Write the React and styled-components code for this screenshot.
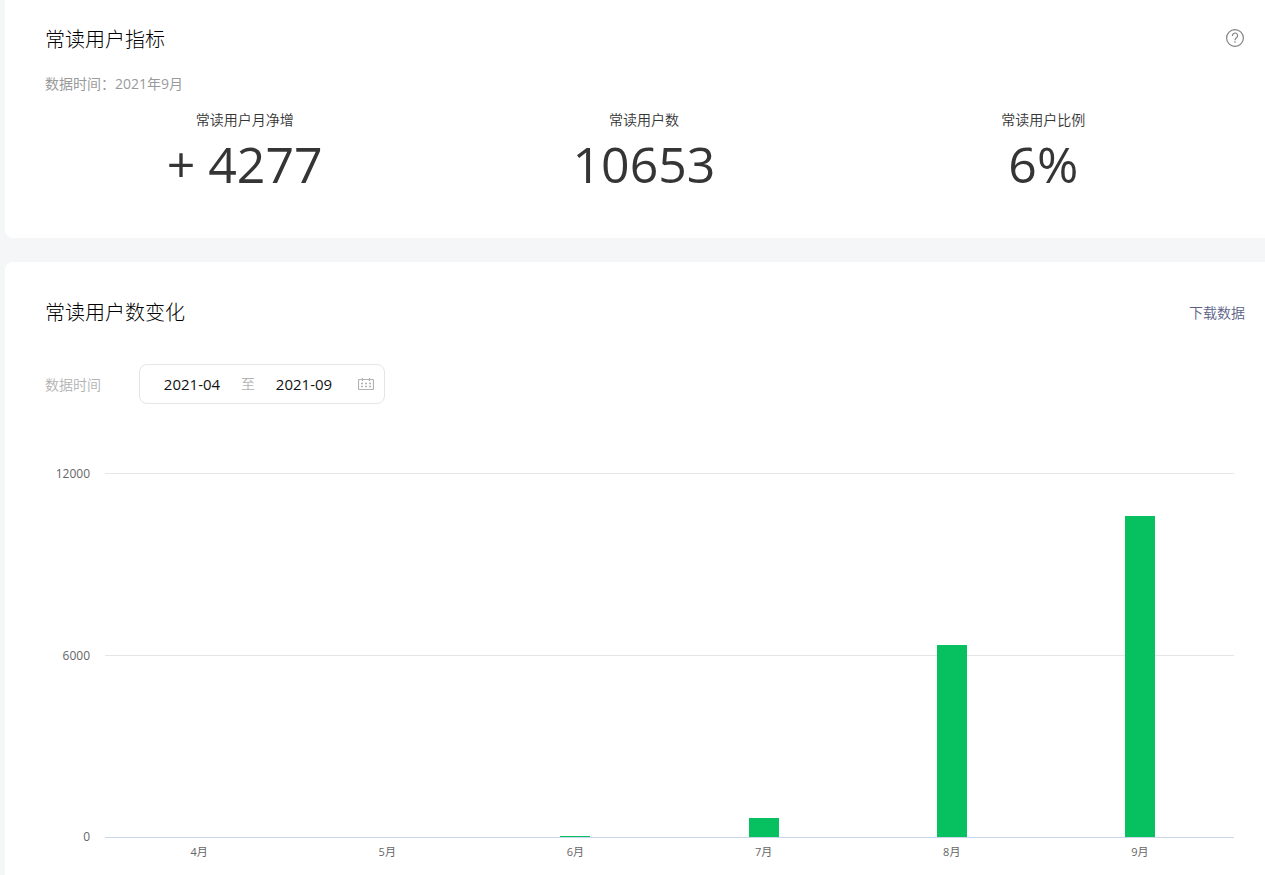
import React from 'react';
import styled, { createGlobalStyle } from 'styled-components';

const GlobalStyle = createGlobalStyle`
  * { box-sizing: border-box; }
  body {
    margin: 0;
    background: #f5f6f8;
    color: #353535;
    font: 350 14px/20px 'Open Sans', 'Noto Sans CJK SC', sans-serif;
  }
`;

const Page = styled.main`
  display: flex;
  flex-direction: column;
  gap: 24px;
  padding-left: 5px;
`;

const Card = styled.section`
  background: #fff;
  border-radius: ${(p) => (p.$first ? '0 0 0 8px' : '8px 0 0 0')};
  padding: ${(p) => (p.$first ? '24px 20px 40px 40px' : '35px 20px 14px 40px')};
`;

const CardHeader = styled.header`
  display: flex;
  align-items: center;
  justify-content: space-between;
`;

const Title = styled.h2`
  margin: 0;
  font-size: 20px;
  line-height: 32px;
  font-weight: 300;
  color: #000;
`;

const HelpButton = styled.button`
  display: flex;
  align-self: flex-start;
  padding: 4px 0;
  border: 0;
  background: none;
  color: #808080;
`;

const DownloadLink = styled.a`
  color: #5b5f86;
  text-decoration: none;
`;

const DataTime = styled.p`
  margin: 18px 0 16px;
  color: #9a9a9a;
  font-weight: 400;
`;

const Stats = styled.dl`
  display: grid;
  grid-template-columns: repeat(3, 1fr);
  margin: 0;
  padding-right: 2px;
  text-align: center;
`;

const StatLabel = styled.dt`
  line-height: 20px;
`;

const StatValue = styled.dd`
  margin: 0;
  font-weight: 400;
  font-size: 50px;
  line-height: 68px;
  white-space: pre;
`;

const Filter = styled.div`
  display: flex;
  align-items: center;
  gap: 38px;
  margin-top: 35px;
`;

const FilterLabel = styled.label`
  padding-top: 2px;
  color: #b2b2b2;
`;

const DateRange = styled.div`
  display: flex;
  align-items: center;
  width: 246px;
  height: 40px;
  padding: 0 10px 0 16px;
  border: 1px solid #e4e5e8;
  border-radius: 8px;
  color: #b2b2b2;
`;

const DateInput = styled.input`
  width: 72px;
  padding: 0;
  border: 0;
  outline: 0;
  background: none;
  color: #111;
  font: 400 15px/20px 'Open Sans', sans-serif;
  text-align: center;
`;

const DateSeparator = styled.span`
  width: 40px;
  text-align: center;
`;

const CalendarButton = styled.button`
  display: flex;
  margin-left: auto;
  padding: 0;
  border: 0;
  background: none;
  color: #b2b2b2;
`;

const Chart = styled.div`
  display: grid;
  grid-template-columns: 45px 1fr;
  column-gap: 15px;
  margin: 60px 11px 0 0;
  color: #666;
  font-size: 11px;
  font-weight: 400;
`;

const YAxis = styled.div`
  display: flex;
  flex-direction: column;
  justify-content: space-between;
  font-size: 12px;
  text-align: right;
`;

const Plot = styled.div`
  display: grid;
  height: 365px;
  margin: 9px 0;
`;

const GridLines = styled.div`
  grid-area: 1 / 1;
  display: flex;
  flex-direction: column;
  justify-content: space-between;
`;

const GridLine = styled.div`
  height: 1px;
  background: ${(p) => (p.$axis ? '#ccd6eb' : '#e6e6e6')};
`;

const Bars = styled.div`
  grid-area: 1 / 1;
  z-index: 1;
  display: grid;
  grid-template-columns: repeat(6, 1fr);
  justify-items: center;
  align-items: end;
  padding-bottom: 1px;
`;

const Bar = styled.div`
  width: 30px;
  background: #07c160;
`;

const XAxis = styled.div`
  grid-column: 2;
  display: grid;
  grid-template-columns: repeat(6, 1fr);
  margin-top: -5px;
  text-align: center;
`;

const stats = [
  ['常读用户月净增', '+ 4277'],
  ['常读用户数', '10653'],
  ['常读用户比例', '6%'],
];

const MAX = 12000;
const ticks = [12000, 6000, 0];
const months = [
  ['4月', 0],
  ['5月', 0],
  ['6月', 33],
  ['7月', 630],
  ['8月', 6340],
  ['9月', 10590],
];

function HelpIcon() {
  return (
    <svg width="20" height="20" viewBox="0 0 20 20" fill="none" stroke="currentColor" strokeWidth="1.2">
      <circle cx="10" cy="10" r="8.4" />
      <path d="M7.4 8V7.600a2.600 2.600 0 1 1 4.300 2c-1 .9-1.700 1.200-1.700 2.600" />
      <path d="M10 13.300v1.500" />
    </svg>
  );
}

function CalendarIcon() {
  return (
    <svg width="16" height="14" viewBox="0 0 16 14" fill="none" stroke="currentColor">
      <rect x="0.5" y="2.500" width="15" height="10" rx="1" strokeWidth="1.200" />
      <path d="M4.500 1v3M11.500 1v3" strokeWidth="1.200" />
      <path d="M3 6.500h2M7 6.500h2M11 6.500h2M3 9.500h2M7 9.500h2M11 9.500h2" strokeWidth="1.500" />
    </svg>
  );
}

export default function App() {
  return (
    <>
      <GlobalStyle />
      <Page>
        <Card $first>
          <CardHeader>
            <Title>常读用户指标</Title>
            <HelpButton type="button" aria-label="帮助">
              <HelpIcon />
            </HelpButton>
          </CardHeader>
          <DataTime>数据时间：2021年9月</DataTime>
          <Stats>
            {stats.map(([label, value]) => (
              <div key={label}>
                <StatLabel>{label}</StatLabel>
                <StatValue>{value}</StatValue>
              </div>
            ))}
          </Stats>
        </Card>

        <Card>
          <CardHeader>
            <Title>常读用户数变化</Title>
            <DownloadLink href="#download">下载数据</DownloadLink>
          </CardHeader>
          <Filter>
            <FilterLabel htmlFor="start-month">数据时间</FilterLabel>
            <DateRange>
              <DateInput id="start-month" type="text" defaultValue="2021-04" />
              <DateSeparator>至</DateSeparator>
              <DateInput type="text" aria-label="结束月份" defaultValue="2021-09" />
              <CalendarButton type="button" aria-label="选择日期">
                <CalendarIcon />
              </CalendarButton>
            </DateRange>
          </Filter>
          <Chart>
            <YAxis>
              {ticks.map((t) => (
                <span key={t}>{t}</span>
              ))}
            </YAxis>
            <Plot>
              <GridLines>
                {ticks.map((t) => (
                  <GridLine key={t} $axis={t === 0} />
                ))}
              </GridLines>
              <Bars>
                {months.map(([name, value]) => (
                  <Bar key={name} style={{ height: `${(value / MAX) * 100}%` }} />
                ))}
              </Bars>
            </Plot>
            <XAxis>
              {months.map(([name]) => (
                <span key={name}>{name}</span>
              ))}
            </XAxis>
          </Chart>
        </Card>
      </Page>
    </>
  );
}
